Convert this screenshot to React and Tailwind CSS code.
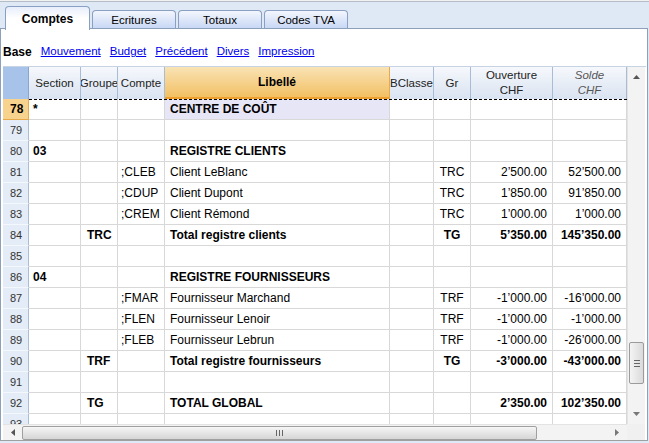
import React from "react";

const COLS = "grid-cols-[26px_52px_37px_47px_225px_44px_37px_82px_74px]";

const rows = [
  { n: "78", sec: "*", lib: "CENTRE DE COÛT", bold: true, sel: true },
  { n: "79" },
  { n: "80", sec: "03", lib: "REGISTRE CLIENTS", bold: true },
  { n: "81", cpt: ";CLEB", lib: "Client LeBlanc", gr: "TRC", ouv: "2’500.00", sol: "52’500.00" },
  { n: "82", cpt: ";CDUP", lib: "Client Dupont", gr: "TRC", ouv: "1’850.00", sol: "91’850.00" },
  { n: "83", cpt: ";CREM", lib: "Client Rémond", gr: "TRC", ouv: "1’000.00", sol: "1’000.00" },
  { n: "84", grp: "TRC", lib: "Total registre clients", gr: "TG", ouv: "5’350.00", sol: "145’350.00", bold: true },
  { n: "85" },
  { n: "86", sec: "04", lib: "REGISTRE FOURNISSEURS", bold: true },
  { n: "87", cpt: ";FMAR", lib: "Fournisseur Marchand", gr: "TRF", ouv: "-1’000.00", sol: "-16’000.00" },
  { n: "88", cpt: ";FLEN", lib: "Fournisseur Lenoir", gr: "TRF", ouv: "-1’000.00", sol: "-1’000.00" },
  { n: "89", cpt: ";FLEB", lib: "Fournisseur Lebrun", gr: "TRF", ouv: "-1’000.00", sol: "-26’000.00" },
  { n: "90", grp: "TRF", lib: "Total registre fournisseurs", gr: "TG", ouv: "-3’000.00", sol: "-43’000.00", bold: true },
  { n: "91" },
  { n: "92", grp: "TG", lib: "TOTAL GLOBAL", ouv: "2’350.00", sol: "102’350.00", bold: true },
];

function Cell({ children, className = "" }) {
  return (
    <div className={"h-[21px] border-r border-b border-[#d8d8d8] flex items-center overflow-hidden whitespace-nowrap " + className}>
      {children}
    </div>
  );
}

function Row({ r }) {
  const b = r.bold ? "font-bold" : "";
  return (
    <div className={"grid " + COLS}>
      <div
        className={
          "h-[21px] border-r border-b flex items-center pl-[7px] " +
          (r.sel
            ? "bg-[#f8d38e] border-[#e8a94a] font-bold text-black text-[12px]"
            : "bg-[#e4ecf7] border-r-[#a9bdd8] border-b-[#f4f7fb] text-[#333] text-[11px]")
        }
      >
        {r.n}
      </div>
      <Cell className={"pl-[4px] " + b}>{r.sec}</Cell>
      <Cell className={"pl-[6px] " + b}>{r.grp}</Cell>
      <Cell className="pl-[3px]">{r.cpt}</Cell>
      <Cell className={"pl-[5px] " + b + (r.sel ? " bg-[#e7e6f6]" : "")}>{r.lib}</Cell>
      <Cell />
      <Cell className={"justify-center " + b}>{r.gr}</Cell>
      <Cell className={"justify-end pr-[5px] " + b}>{r.ouv}</Cell>
      <Cell className={"justify-end pr-[5px] " + b}>{r.sol}</Cell>
    </div>
  );
}

function HeadCell({ children, className = "" }) {
  return (
    <div
      className={
        "h-[32px] flex flex-col items-center justify-center border-r border-[#a9bcd6] bg-gradient-to-b from-[#f6f8fc] to-[#d9e3f1] text-[11.5px] leading-[15px] text-[#222] whitespace-nowrap overflow-hidden " +
        className
      }
    >
      {children}
    </div>
  );
}

function Tab({ label, active }) {
  if (active)
    return (
      <div className="relative z-10 w-[85px] h-[24px] mt-[4px] -mb-[1px] border border-b-0 border-[#8aa0c2] rounded-t-[4px] bg-gradient-to-b from-[#e8eefb] via-white to-white flex items-center justify-center pt-[1px] text-[12px] font-bold text-black">
        {label}
      </div>
    );
  return (
    <div className="w-[84px] h-[19px] mt-[8px] border border-b-0 border-[#8aa0c2] rounded-t-[4px] bg-gradient-to-b from-[#f3f6fd] to-[#c6d6f4] flex items-center justify-center pt-[1px] text-[11.5px] text-black">
      {label}
    </div>
  );
}

function ArrowUp() {
  return (
    <svg width="7" height="4" viewBox="0 0 7 4"><path d="M0 4 L3.5 0 L7 4 Z" fill="#555" /></svg>
  );
}
function ArrowDown() {
  return (
    <svg width="7" height="4" viewBox="0 0 7 4"><path d="M0 0 L3.5 4 L7 0 Z" fill="#777" /></svg>
  );
}
function ArrowLeft() {
  return (
    <svg width="4" height="7" viewBox="0 0 4 7"><path d="M4 0 L0 3.5 L4 7 Z" fill="#555" /></svg>
  );
}
function ArrowRight() {
  return (
    <svg width="4" height="7" viewBox="0 0 4 7"><path d="M0 0 L4 3.5 L0 7 Z" fill="#777" /></svg>
  );
}

export default function App() {
  return (
    <div
      className="w-[649px] h-[443px] bg-[#dfe9f5] overflow-hidden flex flex-col text-black"
      style={{ fontFamily: '"Liberation Sans", Arial, sans-serif' }}
    >
      <div className="h-[2px] bg-[#f1f1f1] border-b border-[#b4bcc8]" />
      {/* tabs */}
      <div className="h-[26px] flex items-start gap-[2px] pl-[5px]">
        <Tab label="Comptes" active />
        <Tab label="Ecritures" />
        <Tab label="Totaux" />
        <Tab label="Codes TVA" />
      </div>
      {/* panel */}
      <div className="flex-1 bg-white border border-[#8c9fbb] border-b-[#a0a0a0] flex flex-col mb-[2px] mr-[1px]">
        <div className="h-[37px] flex items-center gap-[9px] pl-[2px] pt-[9px] text-[11.5px]">
          <span className="font-bold text-[12px]">Base</span>
          <span className="text-[#0000ee] underline">Mouvement</span>
          <span className="text-[#0000ee] underline">Budget</span>
          <span className="text-[#0000ee] underline">Précédent</span>
          <span className="text-[#0000ee] underline">Divers</span>
          <span className="text-[#0000ee] underline">Impression</span>
        </div>
        {/* grid area */}
        <div className="ml-[2px] mr-[1px] flex flex-col border-t border-[#c7d2e2]">
          <div className="flex">
            <div className="w-[624px] flex flex-col text-[12px]">
              {/* header */}
              <div className={"grid " + COLS}>
                <div className="h-[32px] bg-[#a8c3ea] border-r border-[#8aa6cf]" />
                <HeadCell>Section</HeadCell>
                <HeadCell>Groupe</HeadCell>
                <HeadCell>Compte</HeadCell>
                <div className="h-[32px] flex items-center justify-center bg-gradient-to-b from-[#f9e3b4] to-[#f2c062] border-b-2 border-[#ef9f2e] border-r border-r-[#e8a94a] font-bold text-[12px] text-black">
                  Libellé
                </div>
                <HeadCell>BClasse</HeadCell>
                <HeadCell>Gr</HeadCell>
                <HeadCell>
                  <span>Ouverture</span>
                  <span>CHF</span>
                </HeadCell>
                <HeadCell className="italic text-[#555]">
                  <span>Solde</span>
                  <span>CHF</span>
                </HeadCell>
              </div>
              <div className="relative">
                <div className="absolute left-[26px] right-0 top-0 border-t border-dashed border-black z-10" />
                <div className="h-[325px] overflow-hidden">
                  {rows.map((r) => (
                    <Row key={r.n} r={r} />
                  ))}
                  <Row r={{ n: "93" }} />
                </div>
              </div>
            </div>
            {/* vertical scrollbar */}
            <div className="w-[18px] h-[357px] bg-[#f3f3f3] border-l border-[#e3e3e3] flex flex-col items-center">
              <div className="h-[20px] flex items-center justify-center"><ArrowUp /></div>
              <div className="flex-1" />
              <div className="w-[15px] h-[42px] rounded-[2px] border border-[#9b9b9b] bg-gradient-to-r from-[#f4f4f4] to-[#dadada] flex flex-col items-center justify-center gap-[2px]">
                <div className="w-[6px] h-px bg-[#666]" />
                <div className="w-[6px] h-px bg-[#666]" />
                <div className="w-[6px] h-px bg-[#666]" />
              </div>
              <div className="h-[40px] flex items-end justify-center pb-[8px]"><ArrowDown /></div>
            </div>
          </div>
          {/* horizontal scrollbar */}
          <div className="flex h-[16px]">
            <div className="w-[624px] h-[16px] bg-[#f3f3f3] border-t border-[#e3e3e3] flex items-center">
              <div className="w-[19px] flex items-center justify-center"><ArrowLeft /></div>
              <div className="w-[515px] h-[14px] rounded-[2px] border border-[#a0a0a0] bg-gradient-to-b from-[#f6f6f6] to-[#d6d6d6] flex items-center justify-center gap-[2px]">
                <div className="w-px h-[6px] bg-[#666]" />
                <div className="w-px h-[6px] bg-[#666]" />
                <div className="w-px h-[6px] bg-[#666]" />
              </div>
              <div className="flex-1 flex items-center justify-end pr-[8px]"><ArrowRight /></div>
            </div>
            <div className="w-[18px] h-[16px] bg-[#f0f0f0]" />
          </div>
        </div>
      </div>
    </div>
  );
}
